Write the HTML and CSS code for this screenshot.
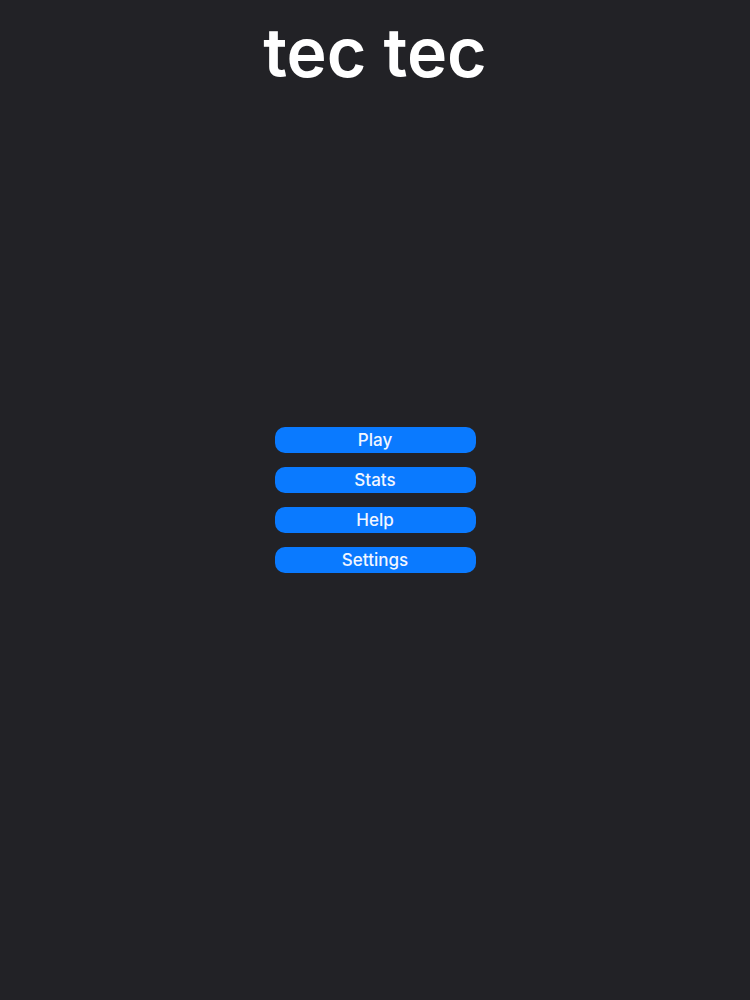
FILE: index.html
```html
<!DOCTYPE html>
<html lang="en">
<head>
<meta charset="utf-8">
<title>tec tec</title>
<link rel="stylesheet" href="styles.css">
</head>
<body>
<div class="screen">
  <h1 class="title">tec tec</h1>
  <nav class="menu">
    <button class="menu-btn">Play</button>
    <button class="menu-btn">Stats</button>
    <button class="menu-btn">Help</button>
    <button class="menu-btn">Settings</button>
  </nav>
  <div class="spacer"></div>
</div>
</body>
</html>
```
FILE: styles.css
```css
html, body {
  margin: 0;
  padding: 0;
  background: #222226;
}
.screen {
  height: 1000px;
  display: grid;
  grid-template-rows: 1fr auto 1fr;
  justify-items: center;
  font-family: Inter, "Liberation Sans", sans-serif;
}
.title {
  align-self: start;
  margin: 12px 0 0;
  text-align: center;
  color: #ffffff;
  font-size: 68px;
  font-weight: 600;
  letter-spacing: 0;
  line-height: 80px;
}
.menu {
  display: flex;
  flex-direction: column;
  gap: 14px;
  width: 201px;
}
.menu-btn {
  height: 26px;
  border: none;
  border-radius: 10px;
  background: #0a7aff;
  color: #f2f6ff;
  font-family: Inter, "Liberation Sans", sans-serif;
  font-size: 17px;
  font-weight: 500;
  padding: 0;
  line-height: 26px;
}
```
